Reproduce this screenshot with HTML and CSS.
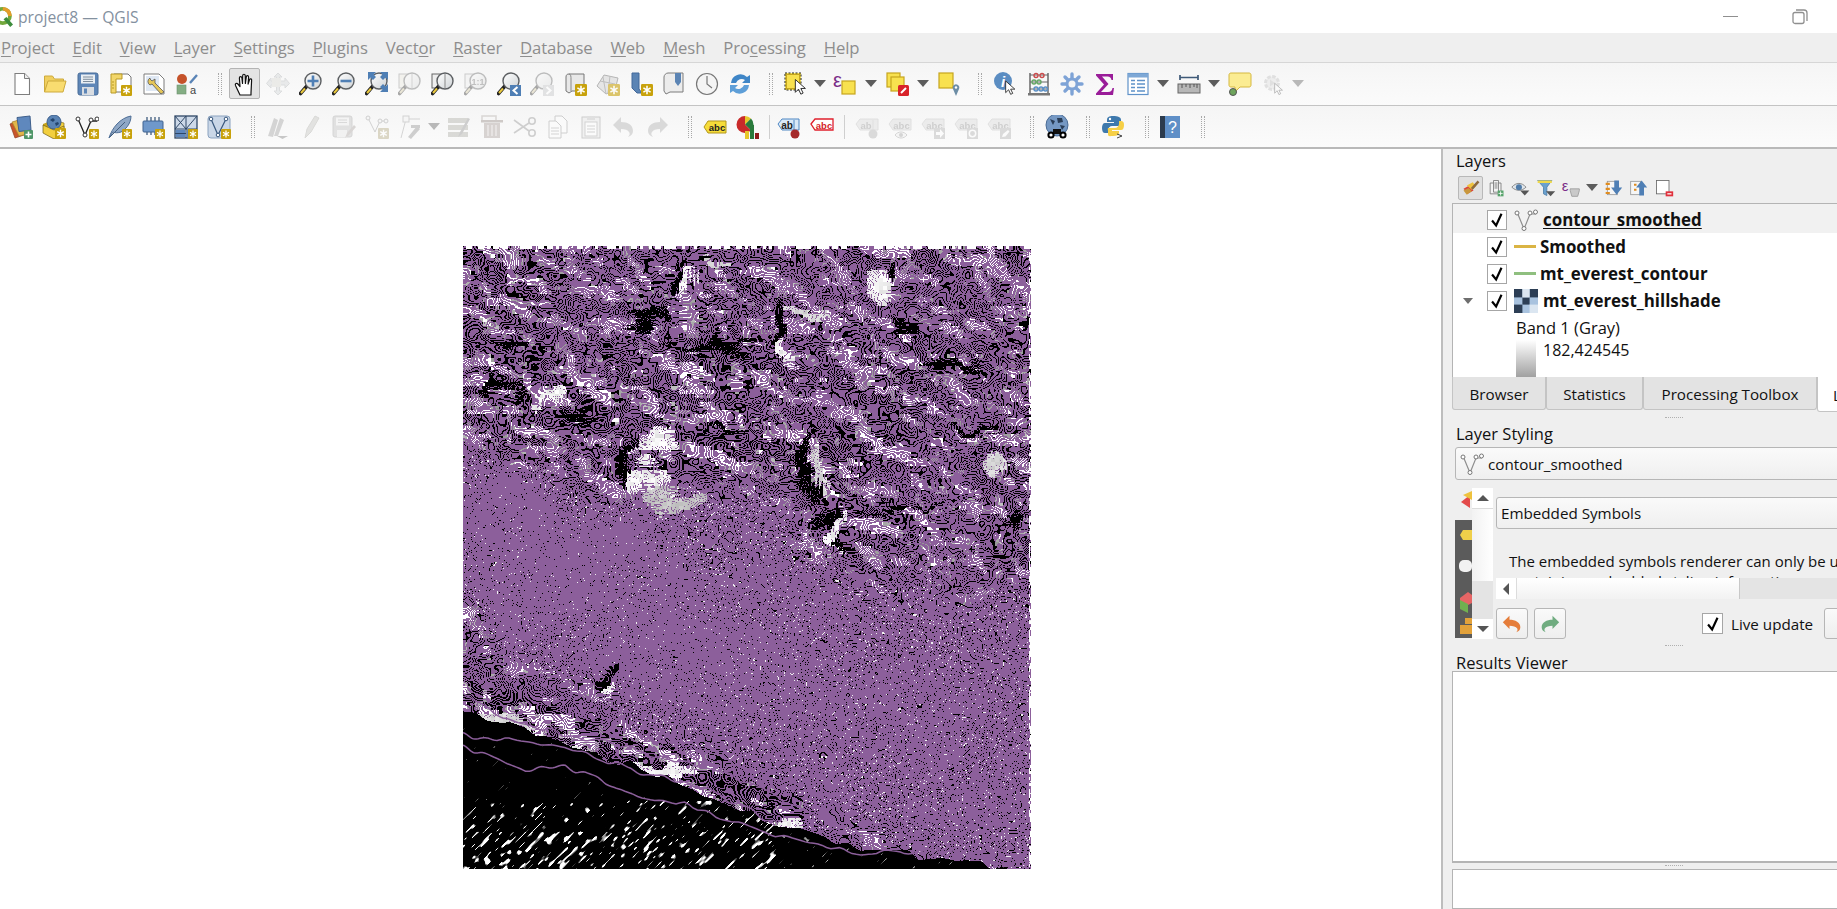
FILE: index.html
```html
<!DOCTYPE html>
<html lang="en">
<head>
<meta charset="utf-8">
<title>project8 — QGIS</title>
<link rel="stylesheet" href="styles.css">
</head>
<body>
<svg class="defs" width="0" height="0" aria-hidden="true">
  <defs>
    <linearGradient id="g-lens" x1="0" y1="0" x2="1" y2="1"><stop offset="0" stop-color="#fff"/><stop offset="1" stop-color="#cfd3d6"/></linearGradient>
    <symbol id="badge" viewBox="0 0 10 10"><rect width="10" height="10" rx="1" fill="#c8a20c"/><path d="M5 1.5v7M2 3.2l6 3.6M8 3.2L2 6.8" stroke="#fff" stroke-width="1.3"/></symbol>
    <symbol id="mag" viewBox="0 0 24 24"><path d="M7.5 14.5L1.5 21.5" stroke="#222" stroke-width="3.6" stroke-linecap="round"/><path d="M6 16.5L2 21" stroke="#eac93f" stroke-width="2"/><circle cx="14" cy="9" r="8" fill="url(#g-lens)" stroke="#5c5f62" stroke-width="1.4"/></symbol>

    <symbol id="i-new" viewBox="0 0 24 24"><path d="M5 1.5h9.5l5 5v16H5z" fill="#fff" stroke="#7e7e7e" stroke-width="1.1"/><path d="M14.5 1.5v5h5" fill="#eee" stroke="#7e7e7e"/></symbol>
    <symbol id="i-open" viewBox="0 0 24 24"><path d="M1.5 20V4h8l2 3h9v2" fill="#f0cf5f" stroke="#cdaa3c"/><path d="M1.5 20L5 9h18l-3 11z" fill="#f9dc70" stroke="#cdaa3c"/></symbol>
    <symbol id="i-save" viewBox="0 0 24 24"><rect x="2" y="1" width="20" height="22" rx="2" fill="#5e86b7" stroke="#486c98"/><rect x="5" y="2.5" width="14" height="9" fill="#e9eef3"/><path d="M7 5h10M7 7.3h10M7 9.5h10" stroke="#7d8c9c"/><rect x="6" y="15" width="12" height="8" fill="#d9dde2"/><rect x="8" y="16.5" width="3" height="5" fill="#5e86b7"/></symbol>
    <symbol id="i-layout" viewBox="0 0 24 24"><path d="M5 2h14l3 3v15H5z" fill="#fff" stroke="#777"/><path d="M2 2h11v5H7v14H2z" fill="#f2d66a" stroke="#b99a25"/><path d="M3 10h2M3 13h2M3 16h2" stroke="#b99a25"/><use href="#badge" x="12" y="13" width="11" height="11"/></symbol>
    <symbol id="i-lman" viewBox="0 0 24 24"><path d="M2 2h15l5 5v15H2z" fill="#fff" stroke="#7d7d7d"/><rect x="4" y="4" width="13" height="15" fill="#dfe8f4"/><path d="M8 6a4 4 0 0 0 0 7l2-1 9 10 3-2-9-9 0-4-3 2-2-2z" fill="#e6c75a" stroke="#555" stroke-width=".8"/></symbol>
    <symbol id="i-style" viewBox="0 0 24 24"><circle cx="7" cy="7" r="5" fill="#c5522a"/><path d="M15 11L22 3" stroke="#5a84b6" stroke-width="2.4"/><rect x="2" y="13" width="9" height="9" fill="#84ae84" stroke="#6e9270" stroke-width=".6"/><text x="15" y="22" class="svgt" font-size="11" fill="#444">a</text></symbol>
    <symbol id="i-hand" viewBox="0 0 24 24"><path d="M7 23L2.5 13.5c-.8-1.8 1.2-2.8 2.4-1.5L7 14.5 6.4 6c0-1.8 2.3-1.8 2.5 0l.6 5.5L9.7 3.6c.1-1.8 2.4-1.8 2.5 0l.2 7.8.9-6.6c.3-1.7 2.4-1.4 2.3.3l-.5 7 1.4-4.4c.6-1.5 2.5-.9 2.1.8L18 21v2z" fill="#fff" stroke="#111" stroke-width="1.2" stroke-linejoin="round"/></symbol>
    <symbol id="i-pansel" viewBox="0 0 24 24"><path d="M12 1l4 4h-2.500v4H19V6l4.500 5.500L19 16v-3h-5.500v6H16l-4 4-4-4h2.500v-6H5v3L.5 11.500 5 6v3h5.500V5H8z" fill="#c8d4dc" stroke="#a7b3ba"/><rect x="6" y="6" width="9" height="9" fill="#d8d8c2"/></symbol>
    <symbol id="i-zin" viewBox="0 0 24 24"><use href="#mag" width="24" height="24"/><path d="M14 3.500v11M8.500 9h11" stroke="#4f7fb5" stroke-width="2.600"/></symbol>
    <symbol id="i-zout" viewBox="0 0 24 24"><use href="#mag" width="24" height="24"/><path d="M8.500 9h11" stroke="#4f7fb5" stroke-width="2.600"/></symbol>
    <symbol id="i-zfull" viewBox="0 0 24 24"><use href="#mag" width="24" height="24"/><g fill="#4f7fb5"><path d="M3 0h8L8.500 2.500 11 5 8 8 5.500 5.500 3 8z"/><path d="M23 0h-8l2.500 2.500L15 5l3 3 2.500-2.500L23 8z"/><path d="M23 20h-8l2.500-2.500L15 15l3-3 2.500 2.500L23 12z"/></g></symbol>
    <symbol id="i-zsel" viewBox="0 0 24 24"><rect x="1" y="2" width="13" height="14" fill="#ecebc6" stroke="#888"/><use href="#mag" width="24" height="24"/><path d="M14 2v14" stroke="#999"/></symbol>
    <symbol id="i-zlayer" viewBox="0 0 24 24"><rect x="1" y="2" width="13" height="14" fill="#eee" stroke="#666"/><use href="#mag" width="24" height="24"/><path d="M14 2v14" stroke="#888"/></symbol>
    <symbol id="i-znat" viewBox="0 0 24 24"><rect x="1" y="2" width="13" height="14" fill="#eee" stroke="#888"/><use href="#mag" width="24" height="24"/><text x="14" y="13" text-anchor="middle" class="svgt" font-size="9" font-weight="700" fill="#666">1:1</text></symbol>
    <symbol id="i-zlast" viewBox="0 0 24 24"><use href="#mag" width="24" height="24"/><rect x="13" y="13" width="11" height="11" fill="#4f7fb5"/><path d="M20.500 15l-4 3.500 4 3.500" fill="none" stroke="#fff" stroke-width="2"/></symbol>
    <symbol id="i-znext" viewBox="0 0 24 24"><use href="#mag" width="24" height="24"/><rect x="13" y="13" width="11" height="11" fill="#b8bec5"/><path d="M16.500 15l4 3.500-4 3.500" fill="none" stroke="#fff" stroke-width="2"/></symbol>
    <symbol id="i-map" viewBox="0 0 24 24"><path d="M6 2h15v17H9l-3 2-3-2V5c0-2 1-3 3-3z" fill="#e8e8e8" stroke="#777"/><path d="M6 2c2 0 2 3 2 5v12" fill="none" stroke="#888"/><use href="#badge" x="12" y="12" width="12" height="12"/></symbol>
    <symbol id="i-3d" viewBox="0 0 24 24"><path d="M1 14L8 3l14 3-3 12-9 4z" fill="#d9d9d9" stroke="#888"/><path d="M4 9l15 3M7 5l3 17M14 4l-2 17" stroke="#999"/><use href="#badge" x="12" y="12" width="12" height="12"/></symbol>
    <symbol id="i-bmark" viewBox="0 0 24 24"><path d="M3 1h7v16l3 4H8l-5-5z" fill="#5b84b4" stroke="#43689a"/><use href="#badge" x="12" y="12" width="12" height="12"/></symbol>
    <symbol id="i-bshow" viewBox="0 0 24 24"><path d="M6 1h15v19H8l-4 2-2-3V5c0-2 2-4 4-4z" fill="#ececec" stroke="#7d7d7d"/><path d="M13 1h6v9l-3 4-3-4z" fill="#5b84b4"/></symbol>
    <symbol id="i-clock" viewBox="0 0 24 24"><circle cx="12" cy="12" r="10.500" fill="#f4f4f4" stroke="#777" stroke-width="1.200"/><path d="M12 4v8l5 4" fill="none" stroke="#777" stroke-width="1.200"/></symbol>
    <symbol id="i-refresh" viewBox="0 0 24 24"><path d="M3 11A9.500 9.500 0 0 1 19 5l3-2v8h-8l3-3a6 6 0 0 0-9 3z" fill="#3f86c7"/><path d="M21 13A9.500 9.500 0 0 1 5 19l-3 2v-8h8l-3 3a6 6 0 0 0 9-3z" fill="#5e9fd8"/></symbol>
    <symbol id="i-cursor" viewBox="0 0 24 24"><path d="M8 6v14l3.500-3.500L14 22l2.500-1.200-2.500-5h5z" fill="#fff" stroke="#222" stroke-width="1"/></symbol>
    <symbol id="i-select" viewBox="0 0 24 24"><rect x="1" y="1" width="16" height="17" fill="#f8e14f" stroke="#222" stroke-dasharray="2 1.500"/><rect x="2.500" y="2.500" width="13" height="14" fill="#f8e14f" stroke="#c6a51e"/><use href="#i-cursor" x="4" y="2" width="22" height="22"/></symbol>
    <symbol id="i-expr" viewBox="0 0 24 24"><text x="0" y="15" class="svgt" font-size="20" fill="#7b2d88">ε</text><rect x="9" y="9" width="13" height="13" fill="#f8e14f" stroke="#c6a51e" stroke-width="1.200"/></symbol>
    <symbol id="i-desel" viewBox="0 0 24 24"><rect x="1" y="1" width="13" height="14" fill="#f8e14f" stroke="#c6a51e" stroke-width="1.200"/><rect x="5" y="5" width="13" height="14" fill="#f8e14f" stroke="#c6a51e" stroke-width="1.200"/><rect x="12" y="13" width="11" height="11" rx="1.500" fill="#d8232a"/><path d="M15 21l5-5" stroke="#fff" stroke-width="2"/></symbol>
    <symbol id="i-selloc" viewBox="0 0 24 24"><rect x="2" y="1" width="14" height="15" fill="#f8e14f" stroke="#c6a51e" stroke-width="1.200"/><path d="M19 24l-3-7a3.300 3.300 0 1 1 6 0z" fill="#6d8ea6"/><circle cx="19" cy="15.500" r="1.200" fill="#fff"/></symbol>
    <symbol id="i-ident" viewBox="0 0 24 24"><circle cx="9" cy="9" r="9" fill="#5b8dc2"/><text x="9" y="15" text-anchor="middle" class="svgt" font-size="15" font-weight="700" font-style="italic" fill="#fff">i</text><use href="#i-cursor" x="5" y="4" width="20" height="20"/></symbol>
    <symbol id="i-calc" viewBox="0 0 24 24"><path d="M3 1v20M21 1v20" stroke="#555" stroke-width="1.300"/><rect x="1" y="21" width="22" height="2.500" fill="#777"/><path d="M3 3h18M3 10h18M3 17h18" stroke="#666"/><g fill="none" stroke-width="1.400"><circle cx="9" cy="3.500" r="2" stroke="#cb4b4b"/><circle cx="15" cy="3.500" r="2" stroke="#cb4b4b"/><circle cx="7" cy="10" r="2" stroke="#65a665"/><circle cx="12" cy="10" r="2" stroke="#65a665"/><circle cx="9" cy="17" r="2" stroke="#5a8fc5"/><circle cx="14" cy="17" r="2" stroke="#5a8fc5"/><circle cx="18.500" cy="17" r="2" stroke="#5a8fc5"/></g></symbol>
    <symbol id="i-gear" viewBox="0 0 24 24"><g stroke="#7ea3d6" stroke-width="3.400" stroke-linecap="round"><path d="M12 2v20M2 12h20M5 5l14 14M19 5L5 19"/></g><circle cx="12" cy="12" r="6.500" fill="#7ea3d6"/><circle cx="12" cy="12" r="3.500" fill="#f6f6f6"/></symbol>
    <symbol id="i-sum" viewBox="0 0 24 24"><path d="M3 2h17v6h-1.500c-.5-2-1.500-3.500-4-3.500H9l6.500 7.500-7.500 8h7c3 0 4-1.500 4.500-4H21l-1 7H3v-1.500l8-9L3 3.500z" fill="#9a1d99"/></symbol>
    <symbol id="i-table" viewBox="0 0 24 24"><rect x="2" y="1.500" width="20" height="21" fill="#fff" stroke="#5f92c9" stroke-width="1.200"/><rect x="2" y="1.500" width="20" height="4" fill="#7ea8d6"/><path d="M5 8.500h4M11 8.500h8M5 12h4M11 12h8M5 15.500h4M11 15.500h8M5 19h4M11 19h8" stroke="#5f92c9" stroke-width="1.500"/></symbol>
    <symbol id="i-measure" viewBox="0 0 24 24"><path d="M3 3v5M21 3v5M3 5.500h18" stroke="#3f5a78" stroke-width="1.700"/><rect x="1" y="12" width="22" height="9" fill="#b7b7b7" stroke="#666"/><path d="M5 12v4M9 12v3M13 12v4M17 12v3M20 12v4" stroke="#555"/></symbol>
    <symbol id="i-tip" viewBox="0 0 24 24"><path d="M3 1h18c1.500 0 2 1 2 2v10c0 1-.5 2-2 2H12l-5 5v-5H3c-1.500 0-2-1-2-2V3c0-1 .5-2 2-2z" fill="#fbec92" stroke="#d5b840"/><circle cx="5" cy="20" r="3.500" fill="#6ea45c" stroke="#555"/></symbol>
    <symbol id="i-run" viewBox="0 0 24 24"><circle cx="11" cy="11" r="6.500" fill="#ddd" stroke="#bbb" stroke-width="3" stroke-dasharray="3.500 1.500"/><path d="M9 7.500v7l5-3.500z" fill="#bbb"/><use href="#i-cursor" x="8" y="7" width="17" height="17"/></symbol>

    <symbol id="i-addl" viewBox="0 0 24 24"><path d="M1 9l9-4 5 15-9 3z" fill="#c9552a" stroke="#8c3f22" stroke-width=".7"/><path d="M3 7l10-3 6 15-9 2z" fill="#e2b64a" stroke="#a48430" stroke-width=".7"/><path d="M8 2.500L21 1l1 14-12 1.500z" fill="#5f88bd" stroke="#3f5f8b"/><rect x="15" y="15" width="9" height="9" rx="1" fill="#4f9668"/><path d="M19.500 16.500v6M16.500 19.500h6" stroke="#fff" stroke-width="1.600"/></symbol>
    <symbol id="i-addp" viewBox="0 0 24 24"><path d="M1 9l5-2v8l14 6v3L1 17z" fill="#c9a51a"/><path d="M6 15l6 3 10-3V8l-4-1-12 8z" fill="#f2cf3e" stroke="#8b7320" stroke-width=".7"/><path d="M1 10l11 5 10-4v9l-10 4-11-6z" fill="#f2cf3e" stroke="#6e5b18" stroke-width=".7"/><circle cx="12" cy="7" r="7" fill="#5a83b4" stroke="#3d5f8c"/><path d="M8 5l3-2 2 2-2 2zM13 8l3-1 1 2-3 2z" fill="#24456e"/><use href="#badge" x="13" y="13" width="11" height="11"/></symbol>
    <symbol id="i-vec" viewBox="0 0 24 24"><path d="M3 4l7 16 6-14h6" fill="none" stroke="#222" stroke-width="1.300"/><g fill="#fff" stroke="#333"><circle cx="3" cy="4" r="2"/><circle cx="10" cy="20" r="2"/><circle cx="16" cy="5" r="2"/><circle cx="22" cy="4" r="2"/></g><use href="#badge" x="14" y="14" width="10" height="10"/></symbol>
    <symbol id="i-feather" viewBox="0 0 24 24"><path d="M1 23C4 13 12 3 23 1c0 8-6 14-10 16-3 1-6 1-8 0z" fill="#8ea7c6" stroke="#4d6d95"/><path d="M2 22L17 7" stroke="#44607f"/><use href="#badge" x="14" y="14" width="10" height="10"/></symbol>
    <symbol id="i-chip" viewBox="0 0 24 24"><path d="M5 2v18M9 2v18M13 2v18M17 2v18" stroke="#2f4f73" stroke-width="1.200" transform="translate(1 0)"/><rect x="2" y="6" width="20" height="11" rx="1" fill="#6f98ca" stroke="#40638f"/><use href="#badge" x="14" y="14" width="10" height="10"/></symbol>
    <symbol id="i-mesh" viewBox="0 0 24 24"><rect x="1" y="1" width="22" height="22" fill="#cdd9e8" stroke="#2f4766" stroke-width="1.300"/><path d="M1 14h22M12 1v22M1 1l11 13M1 14L12 1M12 14L23 1M1 18.500h11" stroke="#2f4766" fill="none"/><rect x="2" y="15" width="9" height="3" fill="#5f88bd"/><rect x="2" y="19" width="9" height="3" fill="#5f88bd"/><rect x="13" y="15" width="9" height="7" fill="#5f88bd"/><use href="#badge" x="14" y="14" width="10" height="10"/></symbol>
    <symbol id="i-virt" viewBox="0 0 24 24"><rect x="1" y="1" width="22" height="22" rx="3" fill="#cad7e7" stroke="#8aa2bf"/><path d="M4 4l7 16 8-16" fill="none" stroke="#39587d" stroke-width="1.200"/><g fill="#fff" stroke="#39587d"><circle cx="4" cy="4" r="1.800"/><circle cx="11" cy="20" r="1.800"/><circle cx="19" cy="4" r="1.800"/></g><use href="#badge" x="14" y="14" width="10" height="10"/></symbol>
    <symbol id="i-pens" viewBox="0 0 24 24"><path d="M2 21L8 3l4 2-5 17zM8 21l6-18 4 2-6 16z" fill="#9a9a9a"/><path d="M11 21h11l-5.500 3z" fill="#777"/></symbol>
    <symbol id="i-pen" viewBox="0 0 24 24"><path d="M6 23L8 14 16 1l4 2-8 14z" fill="#c2c2b0" stroke="#a8a898"/></symbol>
    <symbol id="i-esave" viewBox="0 0 24 24"><rect x="1" y="1" width="19" height="21" rx="2" fill="#bdbdbd" stroke="#9d9d9d"/><rect x="4" y="2.500" width="13" height="8" fill="#f0f0f0"/><path d="M6 5h9M6 7.500h9" stroke="#aaa"/><rect x="5" y="15" width="10" height="7" fill="#e6e6e6"/><path d="M13 23l2-5 7-8 2 2-7 8z" fill="#b69c90"/></symbol>
    <symbol id="i-evert" viewBox="0 0 24 24"><path d="M3 3l7 14 5-11h6" fill="none" stroke="#8f8f8f"/><g fill="#f2f2f2" stroke="#8f8f8f"><circle cx="3" cy="3" r="2"/><circle cx="15" cy="6" r="2"/><circle cx="21" cy="6" r="2"/></g><use href="#badge" x="13" y="13" width="11" height="11"/></symbol>
    <symbol id="i-etool" viewBox="0 0 24 24"><path d="M8 4L3 23M8 4h14" fill="none" stroke="#999"/><rect x="5" y="1" width="6" height="6" fill="#f2f2f2" stroke="#999"/><path d="M10 22l9-11 3 3-9 10zM13 10h9v3h-9z" fill="#8b8b8b"/></symbol>
    <symbol id="i-eattr" viewBox="0 0 24 24"><rect x="1" y="3" width="20" height="5" fill="#a9a98d"/><rect x="1" y="10" width="20" height="5" fill="#a9a98d"/><rect x="1" y="17" width="20" height="5" fill="#a9a98d"/><path d="M11 22l2-5 8-14 2 1-8 15z" fill="#8b8b8b"/></symbol>
    <symbol id="i-trash" viewBox="0 0 24 24"><rect x="2" y="1" width="14" height="5" fill="none" stroke="#b79e8f" stroke-width="1.500"/><rect x="1" y="5" width="22" height="2.500" fill="#a67a68"/><path d="M4 8h16v15H4z" fill="#b99183"/><path d="M8 10v11M12 10v11M16 10v11" stroke="#e9d8d0" stroke-width="1.300"/></symbol>
    <symbol id="i-scis" viewBox="0 0 24 24"><path d="M1 5l15 11M1 18L16 8" stroke="#8c8c8c" stroke-width="1.600"/><circle cx="19" cy="6" r="3.200" fill="none" stroke="#8c8c8c" stroke-width="1.600"/><circle cx="19" cy="18" r="3.200" fill="none" stroke="#8c8c8c" stroke-width="1.600"/></symbol>
    <symbol id="i-copy" viewBox="0 0 24 24"><path d="M9 1h7l5 5v12H9z" fill="#fff" stroke="#8c8c8c"/><path d="M3 6h7l5 5v12H3z" fill="#fff" stroke="#8c8c8c"/><path d="M5 13h8M5 16h8M5 19h8" stroke="#999"/></symbol>
    <symbol id="i-paste" viewBox="0 0 24 24"><rect x="3" y="2" width="18" height="21" fill="#e5e5e5" stroke="#8c8c8c"/><rect x="8" y="1" width="8" height="4" fill="#bbb"/><rect x="6" y="7" width="12" height="14" fill="#fff" stroke="#999"/><path d="M8 11h8M8 14h8M8 17h8" stroke="#999"/></symbol>
    <symbol id="i-undo" viewBox="0 0 24 24"><path d="M1 10l8-8v5c7 0 12 3 12 9 0 3-2 5-5 6 2-2 2-4 1-5-1-2-4-3-8-3v4z" fill="#a9a9a9"/></symbol>
    <symbol id="i-redo" viewBox="0 0 24 24"><path d="M23 10l-8-8v5C8 7 3 10 3 16c0 3 2 5 5 6-2-2-2-4-1-5 1-2 4-3 8-3v4z" fill="#a9a9a9"/></symbol>
    <symbol id="i-lbl" viewBox="0 0 24 24"><path d="M1 12l4-6h18v12H5z" fill="#f6dc3a" stroke="#b3971c"/><text x="14" y="15.500" text-anchor="middle" class="svgt" font-size="9.500" font-weight="700" fill="#222">abc</text></symbol>
    <symbol id="i-chart" viewBox="0 0 24 24"><path d="M9 1a8.500 8.500 0 0 1 6 2.500L9 9.500z" fill="#e7c72a"/><path d="M9 9.500l6-6a8.500 8.500 0 0 1 0 12z" fill="#2a7a3c"/><path d="M9 9.500l6 6a8.500 8.500 0 0 1-6 2.500A8.500 8.500 0 0 1 9 1z" fill="#c92a2a"/><rect x="9" y="16" width="4" height="8" fill="#e7c72a"/><rect x="14" y="10" width="4" height="14" fill="#2a7a3c"/><rect x="19" y="18" width="4" height="6" fill="#8e1c1c"/></symbol>
    <symbol id="i-lpin" viewBox="0 0 24 24"><path d="M1 9l4-5h17v11H5z" fill="#d9e8f7" stroke="#4f87c3"/><text x="10" y="14" text-anchor="middle" class="svgt" font-size="10" font-weight="700" fill="#222">ab</text><path d="M17 5v10" stroke="#4f87c3"/><circle cx="18" cy="19" r="4.500" fill="#a52a2a"/></symbol>
    <symbol id="i-lred" viewBox="0 0 24 24"><path d="M1 9l4-5h18v11H5z" fill="#fff" stroke="#e0202c" stroke-width="1.300"/><text x="14" y="13.500" text-anchor="middle" class="svgt" font-size="9.500" font-weight="700" fill="#d41f2b">abc</text></symbol>
    <symbol id="i-lg-base" viewBox="0 0 24 24"><path d="M1 9l4-5h18v11H5z" fill="#d9d9d9" stroke="#bbb"/><text x="13.500" y="13.500" text-anchor="middle" class="svgt" font-size="9.500" font-weight="700" fill="#8c8c8c">abc</text></symbol>
    <symbol id="i-lg1" viewBox="0 0 24 24"><path d="M1 9l4-5h18v11H5z" fill="#d9d9d9" stroke="#bbb"/><text x="11" y="13.500" text-anchor="middle" class="svgt" font-size="9.500" font-weight="700" fill="#8c8c8c">ab</text><path d="M18 5v10" stroke="#bbb"/><circle cx="18" cy="19" r="4.500" fill="#a9a9a9"/></symbol>
    <symbol id="i-lg2" viewBox="0 0 24 24"><use href="#i-lg-base" width="24" height="24"/><path d="M7 20c3-4 9-4 12 0-3 4-9 4-12 0z" fill="#eee" stroke="#999"/><circle cx="13" cy="20" r="2" fill="#999"/></symbol>
    <symbol id="i-lg3" viewBox="0 0 24 24"><use href="#i-lg-base" width="24" height="24"/><rect x="13" y="13" width="11" height="11" fill="#aaa"/><path d="M15 17h4v-3l4 4.500-4 4.500v-3h-4z" fill="#fff"/></symbol>
    <symbol id="i-lg4" viewBox="0 0 24 24"><use href="#i-lg-base" width="24" height="24"/><rect x="13" y="13" width="11" height="11" fill="#aaa"/><circle cx="18.500" cy="18.500" r="3.200" fill="none" stroke="#fff" stroke-width="1.500"/></symbol>
    <symbol id="i-lg5" viewBox="0 0 24 24"><use href="#i-lg-base" width="24" height="24"/><rect x="13" y="13" width="11" height="11" fill="#aaa"/><path d="M15 22l1-3 5-4 1.500 1.500-4 5z" fill="#fff"/></symbol>
    <symbol id="i-web" viewBox="0 0 24 24"><circle cx="12" cy="10" r="11" fill="#7598c3" stroke="#4c6d96"/><path d="M5 4l5 2-2 4zM12 3h5l1 4-5 1zM15 10l5 1-3 4z" fill="#2a3d56"/><path d="M8 14h8v5H8z" fill="#111"/><circle cx="6" cy="20" r="2.600" fill="#fff" stroke="#000" stroke-width="2"/><circle cx="18" cy="20" r="2.600" fill="#fff" stroke="#000" stroke-width="2"/></symbol>
    <symbol id="i-py" viewBox="0 0 24 24"><path d="M11 1c-4 0-6 1-6 4v2h7v1H3c-2 0-3 2-3 5s1 5 3 5h3v-3c0-2 2-4 4-4h6c2 0 3-1 3-3V5c0-3-3-4-8-4z" fill="#3e79ad"/><path d="M11 21c4 0 6-1 6-3v-2h-7v-1h9c2 0 3-2 3-5s-1-4-3-4h-2v3c0 2-2 4-4 4H7c-2 0-1 1-1 3v3c0 3 2 2 5 2z" fill="#f6cf46"/><circle cx="8" cy="4" r="1.200" fill="#fff"/><path d="M15 19l5 2-5 2" fill="none" stroke="#444"/></symbol>
    <symbol id="i-help" viewBox="0 0 24 24"><rect x="2" y="1" width="20" height="22" fill="#5f8fc7"/><rect x="2" y="1" width="5" height="22" fill="#2c3b4d"/><text x="14.500" y="18" text-anchor="middle" class="svgt" font-size="16" fill="#fff">?</text></symbol>

    <symbol id="i-brush" viewBox="0 0 24 24"><path d="M3 13l7-4 5 6-7 4z" fill="#d9473a"/><path d="M7 9l7-4 4 5-5 4z" fill="#eec23e"/><path d="M13 13L21 4" stroke="#8d6a3f" stroke-width="3"/><path d="M3 15l4 5 6-4-4-4z" fill="#c9973c"/></symbol>
    <symbol id="i-addgrp" viewBox="0 0 24 24"><path d="M5 6h13v13H5z" fill="#f4f4f4" stroke="#777"/><path d="M9 3h6v14H9z" fill="#f4f4f4" stroke="#777"/><path d="M11 5v8M13 5v8" stroke="#888"/><rect x="14" y="15" width="7" height="7" fill="#57a36b"/><path d="M17.500 16v5M15 18.500h5" stroke="#fff"/></symbol>
    <symbol id="i-eye" viewBox="0 0 24 24"><path d="M1 11c5-6 12-6 17 0-5 5-12 5-17 0z" fill="#dfe5ea" stroke="#777"/><circle cx="9.500" cy="11" r="3.600" fill="#4f7ba8"/><path d="M11 15h11l-5.500 6z" fill="#555"/></symbol>
    <symbol id="i-filter" viewBox="0 0 24 24"><path d="M2 3h17l-6 8v10l-4-2v-8z" fill="#6aa1cf" stroke="#4d7ea8"/><rect x="2" y="3" width="17" height="3" fill="#efd94b"/><path d="M12 16h11l-5.500 6z" fill="#555"/></symbol>
    <symbol id="i-eflt" viewBox="0 0 24 24"><text x="1" y="15" class="svgt" font-size="18" fill="#7b2d88">ε</text><path d="M11 13h11v2l-2 7h-7l-2-7z" fill="#c9c9c9" stroke="#999"/></symbol>
    <symbol id="i-expand" viewBox="0 0 24 24"><rect x="4" y="4" width="12" height="16" fill="#f6f6f6" stroke="#999"/><path d="M2 7h5M2 13h5M2 18h5" stroke="#e08c1f" stroke-width="2.500"/><path d="M14 2v9h-4l7 9 7-9h-4V2z" transform="translate(-1 1) scale(.95)" fill="#4f7fb5"/></symbol>
    <symbol id="i-collapse" viewBox="0 0 24 24"><rect x="2" y="4" width="12" height="16" fill="#f6f6f6" stroke="#999"/><path d="M6 8h3M6 14h3" stroke="#e08c1f" stroke-width="2.500"/><path d="M14 22V12h-4l7-9 7 9h-4v10z" transform="translate(-1 0) scale(.95)" fill="#4f7fb5"/></symbol>
    <symbol id="i-rmv" viewBox="0 0 24 24"><rect x="3" y="3" width="15" height="16" fill="#fff" stroke="#666"/><rect x="14" y="16" width="9" height="6" fill="#e0303c"/><path d="M16 19h5" stroke="#fff" stroke-width="1.500"/></symbol>
    <symbol id="i-v" viewBox="0 0 24 24"><path d="M3 4l7 17 6-15h6" fill="none" stroke="#8d8d8d" stroke-width="1.200"/><g fill="#fff" stroke="#777"><circle cx="3" cy="5" r="2"/><circle cx="10" cy="20.500" r="2"/><circle cx="16" cy="5" r="2"/><circle cx="21.500" cy="4" r="2"/></g></symbol>
    <symbol id="i-chk" viewBox="0 0 20 20"><path d="M4.500 10.500L9 16l6-13" fill="none" stroke="#000" stroke-width="2.400"/></symbol>
    <symbol id="i-raster" viewBox="0 0 20 20"><rect width="20" height="20" fill="#a9c3df"/><rect y="0" width="7" height="7" fill="#2c3e55"/><rect x="13" y="0" width="7" height="7" fill="#2c3e55"/><rect x="7" y="7" width="6" height="6" fill="#2c3e55"/><rect y="13" width="7" height="7" fill="#2c3e55"/><rect x="7" y="0" width="6" height="7" fill="#dbe6f1"/><rect x="13" y="13" width="7" height="7" fill="#dbe6f1"/></symbol>
    <symbol id="i-sundo" viewBox="0 0 24 24"><path d="M1 10l8-8v5c7 0 13 3 13 9 0 3-2 5-5 6 2-2 2-4 1-5-1-2-5-3-9-3v4z" fill="#e57d3a"/></symbol>
    <symbol id="i-sredo" viewBox="0 0 24 24"><path d="M23 10l-8-8v5C8 7 2 10 2 16c0 3 2 5 5 6-2-2-2-4-1-5 1-2 5-3 9-3v4z" fill="#70ac80"/></symbol>
  </defs>
</svg>

<div class="app">
  <header class="titlebar">
    <svg class="qlogo" viewBox="0 0 20 20"><circle cx="8" cy="9" r="6.500" fill="none" stroke="#72a83b" stroke-width="3.400"/><path d="M8 2.500a6.500 6.500 0 0 1 6.500 6.500" fill="none" stroke="#e59d2a" stroke-width="3.400"/><path d="M10 11l6 7" stroke="#3d8c3c" stroke-width="3.400"/></svg>
    <span class="title">project8 — QGIS</span>
    <span class="winctl">
      <span class="win-min"></span>
      <svg class="win-restore" width="16" height="16" viewBox="0 0 16 16"><rect x="1" y="3.500" width="11" height="11" rx="2" fill="none" stroke="#8f8f8f" stroke-width="1.300"/><path d="M4 1h8c2 0 3 1 3 3v8" fill="none" stroke="#8f8f8f" stroke-width="1.300"/></svg>
    </span>
  </header>

  <nav class="menubar">
    <span><u>P</u>roject</span><span><u>E</u>dit</span><span><u>V</u>iew</span><span><u>L</u>ayer</span><span><u>S</u>ettings</span><span><u>P</u>lugins</span><span>Vect<u>o</u>r</span><span><u>R</u>aster</span><span><u>D</u>atabase</span><span><u>W</u>eb</span><span><u>M</u>esh</span><span>Pro<u>c</u>essing</span><span><u>H</u>elp</span>
  </nav>

  <div class="toolbar tb1">
    <span class="b"><svg><use href="#i-new"/></svg></span>
    <span class="b"><svg><use href="#i-open"/></svg></span>
    <span class="b"><svg><use href="#i-save"/></svg></span>
    <span class="b"><svg><use href="#i-layout"/></svg></span>
    <span class="b"><svg><use href="#i-lman"/></svg></span>
    <span class="b"><svg><use href="#i-style"/></svg></span>
    <span class="grip g-25"></span>
    <span class="b on"><svg><use href="#i-hand"/></svg></span>
    <span class="b off"><svg><use href="#i-pansel"/></svg></span>
    <span class="b"><svg><use href="#i-zin"/></svg></span>
    <span class="b"><svg><use href="#i-zout"/></svg></span>
    <span class="b"><svg><use href="#i-zfull"/></svg></span>
    <span class="b off"><svg><use href="#i-zsel"/></svg></span>
    <span class="b"><svg><use href="#i-zlayer"/></svg></span>
    <span class="b off"><svg><use href="#i-znat"/></svg></span>
    <span class="b"><svg><use href="#i-zlast"/></svg></span>
    <span class="b off"><svg><use href="#i-znext"/></svg></span>
    <span class="b"><svg><use href="#i-map"/></svg></span>
    <span class="b off2"><svg><use href="#i-3d"/></svg></span>
    <span class="b"><svg><use href="#i-bmark"/></svg></span>
    <span class="b"><svg><use href="#i-bshow"/></svg></span>
    <span class="b"><svg><use href="#i-clock"/></svg></span>
    <span class="b"><svg><use href="#i-refresh"/></svg></span>
    <span class="grip g-23"></span>
    <span class="b"><svg><use href="#i-select"/></svg></span>
    <span class="dd dd-16"></span>
    <span class="b"><svg><use href="#i-expr"/></svg></span>
    <span class="dd dd-20"></span>
    <span class="b"><svg><use href="#i-desel"/></svg></span>
    <span class="dd"></span>
    <span class="b"><svg><use href="#i-selloc"/></svg></span>
    <span class="grip g-24"></span>
    <span class="b"><svg><use href="#i-ident"/></svg></span>
    <span class="b"><svg><use href="#i-calc"/></svg></span>
    <span class="b"><svg><use href="#i-gear"/></svg></span>
    <span class="b"><svg><use href="#i-sum"/></svg></span>
    <span class="b"><svg><use href="#i-table"/></svg></span>
    <span class="dd"></span>
    <span class="b"><svg><use href="#i-measure"/></svg></span>
    <span class="dd"></span>
    <span class="b"><svg><use href="#i-tip"/></svg></span>
    <span class="b off"><svg><use href="#i-run"/></svg></span>
    <span class="dd dd-off"></span>
  </div>

  <div class="toolbar tb2">
    <span class="b"><svg><use href="#i-addl"/></svg></span>
    <span class="b"><svg><use href="#i-addp"/></svg></span>
    <span class="b"><svg><use href="#i-vec"/></svg></span>
    <span class="b"><svg><use href="#i-feather"/></svg></span>
    <span class="b"><svg><use href="#i-chip"/></svg></span>
    <span class="b"><svg><use href="#i-mesh"/></svg></span>
    <span class="b"><svg><use href="#i-virt"/></svg></span>
    <span class="grip g-26"></span>
    <span class="b off"><svg><use href="#i-pens"/></svg></span>
    <span class="b off"><svg><use href="#i-pen"/></svg></span>
    <span class="b off"><svg><use href="#i-esave"/></svg></span>
    <span class="b off"><svg><use href="#i-evert"/></svg></span>
    <span class="b off"><svg><use href="#i-etool"/></svg></span>
    <span class="dd dd-16 dd-off"></span>
    <span class="b off"><svg><use href="#i-eattr"/></svg></span>
    <span class="b off"><svg><use href="#i-trash"/></svg></span>
    <span class="b off"><svg><use href="#i-scis"/></svg></span>
    <span class="b off"><svg><use href="#i-copy"/></svg></span>
    <span class="b off"><svg><use href="#i-paste"/></svg></span>
    <span class="b off"><svg><use href="#i-undo"/></svg></span>
    <span class="b off"><svg><use href="#i-redo"/></svg></span>
    <span class="grip g-25"></span>
    <span class="b"><svg><use href="#i-lbl"/></svg></span>
    <span class="b"><svg><use href="#i-chart"/></svg></span>
    <span class="vsep vs-a"></span>
    <span class="b"><svg><use href="#i-lpin"/></svg></span>
    <span class="b"><svg><use href="#i-lred"/></svg></span>
    <span class="vsep"></span>
    <span class="b off"><svg><use href="#i-lg1"/></svg></span>
    <span class="b off"><svg><use href="#i-lg2"/></svg></span>
    <span class="b off"><svg><use href="#i-lg3"/></svg></span>
    <span class="b off"><svg><use href="#i-lg4"/></svg></span>
    <span class="b off"><svg><use href="#i-lg5"/></svg></span>
    <span class="grip g-25"></span>
    <span class="b"><svg><use href="#i-web"/></svg></span>
    <span class="grip g-24"></span>
    <span class="b"><svg><use href="#i-py"/></svg></span>
    <span class="grip g-27"></span>
    <span class="b"><svg><use href="#i-help"/></svg></span>
    <span class="grip g-25"></span>
  </div>

  <main class="main">
    <section class="canvas-area">
      <canvas id="map" class="map" width="568" height="623"></canvas>
    </section>

    <aside class="dock">
      <h2 class="dock-title t-layers">Layers</h2>
      <div class="layer-tools">
        <span class="lt on"><svg><use href="#i-brush"/></svg></span>
        <span class="lt"><svg><use href="#i-addgrp"/></svg></span>
        <span class="lt"><svg><use href="#i-eye"/></svg></span>
        <span class="lt"><svg><use href="#i-filter"/></svg></span>
        <span class="lt"><svg><use href="#i-eflt"/></svg></span>
        <span class="dd lt-dd"></span>
        <span class="lt"><svg><use href="#i-expand"/></svg></span>
        <span class="lt"><svg><use href="#i-collapse"/></svg></span>
        <span class="lt"><svg><use href="#i-rmv"/></svg></span>
      </div>

      <div class="tree">
        <div class="row sel">
          <span class="twist"></span>
          <span class="chk"><svg><use href="#i-chk"/></svg></span>
          <svg class="lic"><use href="#i-v"/></svg>
          <b class="name u">contour_smoothed</b>
        </div>
        <div class="row">
          <span class="twist"></span>
          <span class="chk"><svg><use href="#i-chk"/></svg></span>
          <span class="sym s-gold"></span>
          <b class="name nm">Smoothed</b>
        </div>
        <div class="row">
          <span class="twist"></span>
          <span class="chk"><svg><use href="#i-chk"/></svg></span>
          <span class="sym s-green"></span>
          <b class="name nm">mt_everest_contour</b>
        </div>
        <div class="row">
          <span class="twist open"></span>
          <span class="chk"><svg><use href="#i-chk"/></svg></span>
          <svg class="lic"><use href="#i-raster"/></svg>
          <b class="name">mt_everest_hillshade</b>
        </div>
        <div class="band">Band 1 (Gray)</div>
        <div class="ramp"><span class="swatch"></span><span>182,424545</span></div>
      </div>

      <div class="tabs">
        <span class="tab t1">Browser</span>
        <span class="tab t2">Statistics</span>
        <span class="tab t3">Processing Toolbox</span>
        <span class="tab active">Layer Styling</span>
      </div>
      <div class="hgrip"></div>

      <h2 class="dock-title t-style">Layer Styling</h2>
      <div class="combo c-layer"><svg class="lic"><use href="#i-v"/></svg><span>contour_smoothed</span></div>

      <div class="style-body">
        <div class="side">
          <svg class="side-ic" viewBox="0 0 17 150" width="17" height="150">
            <path d="M6 14l9-7v13z" fill="#e34b4b"/><path d="M8 7l9-4v9z" fill="#eec23e"/>
            <rect x="0" y="32" width="17" height="118" fill="#5b5b5b"/>
            <path d="M5 47l3-5h9v10H8z" fill="#efcf4a"/>
            <rect x="4" y="72" width="13" height="12" rx="5" fill="#f2f2f2"/>
            <path d="M5 110l8-6 4 3v8l-4 2-8-3z" fill="#e66565"/>
            <path d="M5 112l8 4v9l-8-4z" fill="#70b050"/>
            <path d="M10 130h7v6h-7zM5 137h12v9H5z" fill="#e2a13a"/>
          </svg>
        </div>
        <div class="vscroll">
          <span class="sb-btn"><i class="up"></i></span>
          <span class="sb-fill"></span>
          <span class="sb-trough"></span>
          <span class="sb-btn"><i class="down"></i></span>
        </div>
        <div class="style-main">
          <div class="scroll-view">
            <div class="combo c-rend"><span>Embedded Symbols</span></div>
            <p class="note">The embedded symbols renderer can only be used with layers containing embedded styling information.</p>
          </div>
          <div class="hscroll">
            <span class="sb-btn-h"><i class="left"></i></span>
            <span class="sb-thumb"></span>
          </div>
          <div class="actions">
            <span class="btn"><svg><use href="#i-sundo"/></svg></span>
            <span class="btn"><svg><use href="#i-sredo"/></svg></span>
            <span class="live"><span class="chk"><svg><use href="#i-chk"/></svg></span><span>Live update</span></span>
            <span class="btn btn-apply"></span>
          </div>
        </div>
      </div>
      <div class="hgrip g2"></div>

      <h2 class="dock-title t-res">Results Viewer</h2>
      <div class="box results"></div>
      <div class="hgrip g3"></div>
      <div class="box log"></div>
    </aside>
  </main>
</div>
<script src="map.js"></script>
</body>
</html>
```
FILE: styles.css
```css
* { box-sizing: border-box; }
html, body { margin: 0; height: 100%; overflow: hidden; }
body { font-family: "Open Sans", "Noto Sans", "Liberation Sans", sans-serif; font-size: 15.2px; color: #111; background: #efefef; }
.defs { position: absolute; }
.svgt { font-family: "Liberation Sans", sans-serif; }
.app { display: flex; flex-direction: column; width: 1837px; height: 909px; }

.titlebar { height: 33px; background: #fff; display: flex; align-items: center; flex: none; overflow: hidden; }
.qlogo { width: 22px; height: 22px; margin-left: -6px; margin-right: 2px; flex: none; }
.title { font-size: 15.7px; color: #84919f; }
.winctl { margin-left: auto; display: flex; align-items: center; }
.win-min { width: 15px; height: 1px; background: #8f8f8f; margin-right: 54px; }
.win-restore { margin-right: 29px; }

.menubar { height: 30px; flex: none; display: flex; align-items: center; gap: 18px; padding-left: 1px; background: #efefef; border-bottom: 1px solid #d6d6d6; font-size: 16.7px; letter-spacing: -.12px; color: #8d8d8d; }
.menubar u { text-decoration-thickness: 1px; text-underline-offset: 2px; }

.toolbar { flex: none; display: flex; align-items: center; background: linear-gradient(#f5f5f5, #fbfbfb); overflow: hidden; }
.tb1 { height: 43px; padding-left: 5px; border-bottom: 1px solid #c4c4c4; padding-bottom: 1px; }
.tb2 { height: 43px; padding-left: 4px; border-bottom: 2px solid #b9b9b9; padding-top: 1px; }
.b { width: 33px; height: 31px; flex: none; display: flex; align-items: center; justify-content: center; border: 1px solid transparent; border-radius: 2px; }
.b svg { width: 24px; height: 24px; display: block; }
.b.on { width: 31px; margin: 0 1px; background: #e3e3e3; border-color: #b4b4b4; }
.off svg { opacity: .38; filter: grayscale(.7); }
.off2 svg { opacity: .6; }
.grip { flex: none; width: 4px; height: 22px; border-left: 1px dotted #a8a8a8; border-right: 1px dotted #a8a8a8; }
.g-23 { margin: 0 6px 0 13px; }
.g-24 { margin: 0 7px 0 13px; }
.g-25 { margin: 0 6px 0 15px; }
.g-26 { margin: 0 6px 0 16px; }
.g-27 { margin: 0 4px 0 15px; }
.dd { flex: none; width: 18px; height: 8px; position: relative; }
.dd::after { content: ""; position: absolute; left: 50%; top: 0; margin-left: -6px; border: 6px solid transparent; border-top: 7px solid #5c5c5c; border-bottom: 0; }
.dd-16 { width: 16px; }
.dd-20 { width: 20px; }
.dd-off::after { border-top-color: #b8b8b8; }
.vsep { flex: none; width: 1px; height: 24px; background: #cfcfcf; margin: 0 5px 0 6px; }
.vs-a { margin: 0 2px 0 5px; }

.main { flex: 1; display: flex; min-height: 0; }
.canvas-area { width: 1443px; flex: none; background: #fff; border-right: 2px solid #bdbdbd; padding: 97px 0 0 463px; overflow: hidden; }
.map { display: block; width: 568px; height: 623px; }

.dock { flex: 1; min-width: 0; padding-left: 9px; overflow: hidden; display: flex; flex-direction: column; background: #efefef; white-space: nowrap; }
.dock-title { margin: 0; font-weight: 400; font-size: 16.5px; line-height: 20px; padding-left: 4px; }
.t-layers { margin-top: 2px; }
.t-style { margin-top: 0; height: 22px; }
.t-res { margin-top: 3px; height: 18px; }

.layer-tools { display: flex; align-items: center; height: 29px; margin-top: 2px; padding-left: 6px; }
.lt { width: 25px; height: 24px; flex: none; display: flex; align-items: center; justify-content: center; border: 1px solid transparent; border-radius: 2px; }
.lt svg { width: 20px; height: 20px; }
.lt.on { background: #e0e0e0; border-color: #b8b8b8; }
.lt-dd { width: 18px; }

.tree { width: 450px; height: 174px; margin-top: 1px; padding-top: 2px; background: #fff; border: 1px solid #b4b4b4; border-bottom: 0; overflow: hidden; flex: none; font-size: 16px; }
.row { display: flex; align-items: center; height: 27px; }
.row.sel { background: #f1f1f1; height: 29px; margin-top: -2px; padding-top: 2px; }
.twist { width: 34px; flex: none; position: relative; height: 10px; }
.twist.open::after { content: ""; position: absolute; left: 10px; top: 2px; border: 5px solid transparent; border-top: 6px solid #6e6e6e; border-bottom: 0; }
.chk { width: 20px; height: 20px; flex: none; background: #fff; border: 1px solid #a6a6a6; display: flex; align-items: center; justify-content: center; }
.chk svg { width: 18px; height: 18px; }
.lic { width: 24px; height: 24px; flex: none; margin-left: 6px; }
.row .lic { margin-left: 7px; }
.name { margin-left: 5px; font-size: 16.9px; font-weight: 700; }
.nm { margin-left: 4px; }
.name.u { text-decoration: underline; text-underline-offset: 2px; }
.sym { width: 22px; height: 3px; margin-left: 7px; flex: none; }
.s-gold { background: #dab444; }
.s-green { background: #8fbf7f; }
.band { padding-left: 63px; line-height: 22px; height: 23px; margin-top: 3px; font-size: 16.5px; }
.ramp { display: flex; padding-left: 63px; line-height: 20px; }
.swatch { width: 20px; height: 40px; background: linear-gradient(#fff, #999); margin-right: 7px; flex: none; }

.tabs { display: flex; height: 33px; flex: none; width: 470px; }
.tab { display: flex; align-items: center; justify-content: center; height: 33px; padding-top: 2px; background: #e3e3e3; border: 1px solid #c4c4c4; border-top: 0; border-radius: 0 0 3px 3px; font-size: 15.2px; flex: none; }
.t1 { width: 94px; }
.t2 { width: 97px; }
.t3 { width: 174px; }
.tab.active { background: #fff; width: 125px; height: 35px; justify-content: flex-start; padding-left: 15px; }
.hgrip { height: 14px; flex: none; position: relative; width: 459px; }
.hgrip::after { content: ""; position: absolute; left: 213px; top: 7px; width: 18px; border-top: 1px dotted #b0b0b0; }
.hgrip.g2 { height: 11px; }
.hgrip.g2::after { top: 6px; }
.hgrip.g3 { height: 6px; }
.hgrip.g3::after { top: 2px; }

.combo { flex: none; height: 33px; background: linear-gradient(#fafafa, #efefef); border: 1px solid #b6b6b6; border-radius: 3px; display: flex; align-items: center; }
.c-layer { width: 480px; margin: 1px 0 0 3px; }
.c-layer .lic { margin: 0 4px 0 4px; }
.c-rend { width: 460px; height: 32px; padding-left: 4px; }

.style-body { display: flex; height: 151px; margin: 8px 0 0 3px; flex: none; width: 500px; }
.side { width: 17px; flex: none; overflow: hidden; }
.side-ic { display: block; }
.vscroll { width: 21px; flex: none; display: flex; flex-direction: column; background: #fff; }
.sb-btn { height: 21px; flex: none; display: flex; align-items: center; justify-content: center; background: #fff; border-bottom: 1px solid #dcdcdc; }
.sb-btn:last-child { border-bottom: 0; border-top: 1px solid #e4e4e4; }
.sb-fill { height: 72px; flex: none; background: linear-gradient(90deg, #f2f2f2, #fff); }
.sb-trough { flex: 1; background: #e4e4e4; }
.up, .down, .left { display: block; width: 0; height: 0; border: 5px solid transparent; }
.up { border-top: 0; border-left-width: 6px; border-right-width: 6px; border-bottom: 6px solid #555; }
.down { border-bottom: 0; border-left-width: 6px; border-right-width: 6px; border-top: 6px solid #555; }
.left { border-left: 0; border-top-width: 6px; border-bottom-width: 6px; border-right: 6px solid #555; }

.style-main { flex: 1; display: flex; flex-direction: column; padding-left: 3px; min-width: 0; }
.scroll-view { height: 90px; flex: none; padding-top: 9px; overflow: hidden; }
.note { margin: 22px 0 0 13px; width: 470px; line-height: 20px; font-size: 15px; white-space: normal; }
.hscroll { height: 21px; flex: none; display: flex; background: #e4e4e4; }
.sb-btn-h { width: 21px; flex: none; display: flex; align-items: center; justify-content: center; background: #fff; border-right: 1px solid #dcdcdc; }
.sb-thumb { width: 223px; flex: none; background: linear-gradient(#fff, #f2f2f2); border-right: 1px solid #c8c8c8; }
.actions { height: 40px; flex: none; display: flex; align-items: flex-end; }
.btn { width: 32px; height: 31px; flex: none; margin-right: 6px; background: linear-gradient(#fafafa, #eee); border: 1px solid #b6b6b6; border-radius: 3px; display: flex; align-items: center; justify-content: center; }
.btn svg { width: 20px; height: 20px; }
.live { display: flex; align-items: center; gap: 8px; margin-left: 130px; height: 31px; width: 116px; flex: none; }
.live .chk { width: 21px; height: 21px; }
.btn-apply { width: 60px; margin: 0 0 0 6px; }

.box { background: #fff; border: 1px solid #b4b4b4; flex: none; width: 470px; }
.results { height: 192px; border-width: 1px 0 2px 1px; }
.log { flex: 1; }
```
FILE: map.js
```js
(function () {
  var cv = document.getElementById('map');
  var ctx = cv.getContext('2d');
  var W = cv.width, H = cv.height;
  var img = ctx.createImageData(W, H);
  var d = img.data;

  function hash(x, y) {
    var s = Math.sin(x * 127.1 + y * 311.7) * 43758.5453;
    return s - Math.floor(s);
  }
  function sm(t) { return t * t * (3 - 2 * t); }
  function vn(x, y) {
    var xi = Math.floor(x), yi = Math.floor(y);
    var u = sm(x - xi), v = sm(y - yi);
    var a = hash(xi, yi), b = hash(xi + 1, yi), c = hash(xi, yi + 1), e = hash(xi + 1, yi + 1);
    return a + (b - a) * u + (c - a) * v + (a - b - c + e) * u * v;
  }
  function relief(px, py) {
    return vn(px / 30, py / 18) * .55 + vn(px / 14 + 3, py / 10 + 8) * .3 + vn(px / 7 + 7, py / 6 + 1) * .15;
  }
  function contour(x, y) {
    return vn(x / 30, y / 22) * .55 + vn(x / 14 + 5, y / 10 + 2) * .3 + vn(x / 7 + 9, y / 6 + 4) * .15;
  }
  function coastY(nx) {
    var pts = [[0, .745], [.1, .775], [.2, .805], [.3, .835], [.42, .875], [.55, .925], [.7, .965], [.85, .985], [1, 1.0]];
    for (var i = 1; i < pts.length; i++) {
      if (nx <= pts[i][0]) {
        var t = (nx - pts[i - 1][0]) / (pts[i][0] - pts[i - 1][0]);
        return pts[i - 1][1] + (pts[i][1] - pts[i - 1][1]) * t;
      }
    }
    return 1;
  }
  function gauss(nx, ny, cx, cy, rx, ry) {
    var a = (nx - cx) / rx, b = (ny - cy) / ry;
    return Math.exp(-(a * a + b * b));
  }
  function density(nx, ny, x, y) {
    var c = .47 + nx * .33 + (vn(x / 50, y / 50) - .5) * .1;
    var hw = .085 + nx * .09;
    var t = Math.abs(ny - c) / hw;
    var band = t < 1 ? 1 : Math.max(0, 1 - (t - 1) * 1.25);
    var base = (ny > .6 ? .78 : .66) + (vn(x / 60, y / 40) - .5) * .22;
    var peak = .965 - nx * .07 + (vn(x / 40, y / 30) - .5) * .08;
    var v = base + (peak - base) * band;
    if (nx > .55 && ny > .72) v = Math.max(v, .8 + (vn(x / 25, y / 25) - .5) * .14);
    return v;
  }
  // features: [cx, cy, rx, ry, tone] tone 1 = white, 0 = black
  var F = [
    [.335, .315, .042, .024, 1], [.325, .375, .045, .03, 1], [.37, .41, .06, .022, .82], [.29, .35, .012, .05, 0],
    [.605, .345, .016, .055, 0], [.612, .395, .015, .03, 0], [.632, .36, .008, .05, .9],
    [.66, .455, .018, .03, 1], [.645, .44, .025, .012, 0], [.67, .475, .01, .014, 0],
    [.97, .44, .02, .02, 0], [.375, .055, .014, .03, 0], [.39, .06, .014, .02, 1],
    [.33, .115, .055, .018, 0], [.44, .163, .1, .01, 0], [.55, .13, .012, .05, 0],
    [.56, .17, .014, .018, 1], [.735, .065, .034, .032, 1], [.76, .04, .012, .025, 0],
    [.76, .42, .11, .005, 0], [.07, .232, .06, .01, 0], [.15, .245, .03, .012, 1],
    [.25, .7, .022, .024, 0], [.265, .715, .016, .014, 1], [.06, .765, .06, .022, .9],
    [.36, .845, .07, .013, 1], [.215, .82, .024, .014, 1], [.575, .94, .03, .009, 1],
    [.93, .355, .028, .022, .9], [.6, .105, .05, .008, .9], [.44, .03, .03, .01, .9],
    [.2, .27, .05, .007, 0], [.46, .29, .05, .007, 0], [.86, .19, .06, .008, 0],
    [.1, .16, .06, .007, 0], [.78, .13, .03, .01, 0], [.9, .3, .05, .007, 0]
  ];

  for (var y = 0; y < H; y++) {
    for (var x = 0; x < W; x++) {
      var nx = x / W, ny = y / H;
      var bx = x - x % 4, by = y - y % 4;
      var jx = (vn(x / 14, y / 14) - .5) * .035, jy = (vn(x / 14 + 40, y / 14 + 40) - .5) * .03;
      var lit = relief(bx + 4, by) - relief(bx, by + 4);
      var tone = 100 + lit * 1300;
      var coast = coastY(nx) + (vn(x / 12, 3) - .5) * .014;
      var land = ny < coast;
      var D = density(nx, ny, x, y);
      var dist = coast - ny;
      if (dist < .05 && nx < .6) D *= .65;
      var force = 0, ftone = 0;
      for (var i = 0; i < F.length; i++) {
        var q = F[i];
        var g = gauss((bx + 2) / W + jx, (by + 2) / H + jy, q[0], q[1], q[2], q[3]);
        if (g > force) { force = g; ftone = q[4]; }
      }
      if (force > .45) {
        D *= (1 - force) * .8;
        tone = ftone * 255 * (.88 + .12 * hash(bx, by));
      }
      tone = tone < 0 ? 0 : tone > 255 ? 255 : tone;
      var c;
      var purple = false;
      if (!land) {
        var fleck = vn((x + y) / 3, (x - y) / 10);
        var th = ny > .94 ? .71 : ny > .89 ? .8 : .94;
        if (nx > .55) th += .2;
        var v = (fleck - th) * 5;
        c = v <= 0 ? 0 : Math.min(255, v * 420);
      } else {
        var f = contour(x, y) * 20;
        var fr = f - Math.floor(f);
        if (fr < D) {
          purple = true;
        } else if (force > .45) {
          c = tone;
        } else {
          c = tone < 150 ? 0 : tone > 195 ? 255 : tone;
          if (D > .82) c = hash(x - x % 2, y - y % 2) > .22 ? 0 : 240;
        }
      }
      if (y < 3 || x > W - 3) {
        if (hash(x - x % 3, y - y % 3) > .5) { purple = false; c = 255; }
      }
      var p = (y * W + x) * 4;
      if (purple) { d[p] = 140; d[p + 1] = 95; d[p + 2] = 155; }
      else { d[p] = d[p + 1] = d[p + 2] = c; }
      d[p + 3] = 255;
    }
  }
  ctx.putImageData(img, 0, 0);

  function wob(pts, seed) {
    ctx.beginPath();
    for (var i = 0; i < pts.length - 1; i++) {
      var a = pts[i], e = pts[i + 1];
      for (var t = 0; t < 1; t += .05) {
        var px = a[0] + (e[0] - a[0]) * t, py = a[1] + (e[1] - a[1]) * t;
        var oy = (vn(px * .09 + seed, seed) - .5) * 7;
        if (i === 0 && t === 0) ctx.moveTo(px, py + oy); else ctx.lineTo(px, py + oy);
      }
    }
    ctx.stroke();
  }
  function P(a) { return a.map(function (q) { return [q[0] * W, q[1] * H]; }); }
  ctx.strokeStyle = '#8c5f9b';
  ctx.lineWidth = 1.5;
  wob(P([[0, .715], [.07, .755], [.16, .78], [.26, .8], [.4, .83], [.5, .86], [.66, .93]]), 2);
  wob(P([[0, .785], [.06, .79], [.2, .81], [.3, .84], [.42, .87], [.56, .93]]), 7);
  wob(P([[0, .805], [.03, .812], [.11, .84], [.18, .835], [.27, .87], [.42, .905], [.55, .945], [.7, .975], [.84, .97], [1, .995]]), 13);
}());
```
